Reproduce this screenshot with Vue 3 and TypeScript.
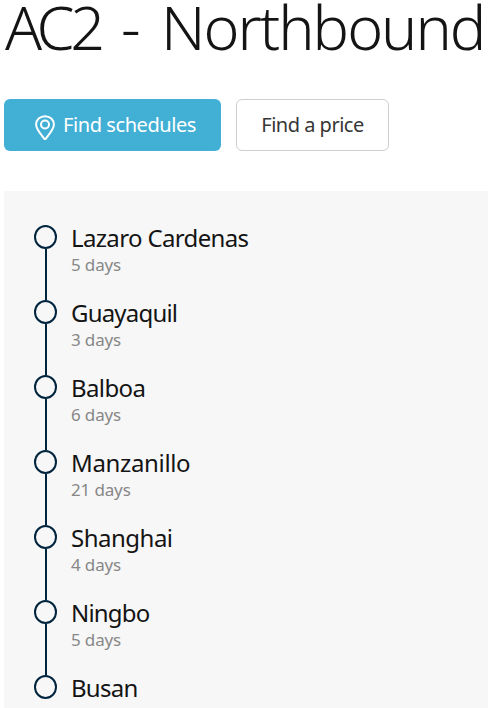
<script setup lang="ts">
interface Stop {
  port: string
  tracking: number
  transit?: string
}

const stops: Stop[] = [
  { port: 'Lazaro Cardenas', tracking: -0.65, transit: '5 days' },
  { port: 'Guayaquil', tracking: -0.8, transit: '3 days' },
  { port: 'Balboa', tracking: -0.6, transit: '6 days' },
  { port: 'Manzanillo', tracking: -0.35, transit: '21 days' },
  { port: 'Shanghai', tracking: -0.5, transit: '4 days' },
  { port: 'Ningbo', tracking: -0.8, transit: '5 days' },
  { port: 'Busan', tracking: -0.75 },
]
</script>

<template>
  <main class="page">
    <h1 class="title"><span class="code">AC2</span> <span class="dash">-</span> <span class="direction">Northbound</span></h1>
    <div class="actions">
      <button class="btn primary" type="button">
        <svg class="pin" viewBox="0 0 20 26" fill="none" stroke="currentColor" stroke-width="2">
          <path d="M9.4 24C7 20.6 1.1 14.6 1.1 9.6C1.1 4.8 5 1.2 10 1.2S18.9 4.8 18.9 9.6C18.9 14.6 13 20.6 10.6 24Z" stroke-linejoin="round" />
          <circle cx="10" cy="9.5" r="4" />
        </svg>
        <span>Find schedules</span>
      </button>
      <button class="btn secondary" type="button"><span>Find a price</span></button>
    </div>
    <ol class="route">
      <li v-for="stop in stops" :key="stop.port" class="stop">
        <div class="rail">
          <span class="dot"></span>
          <span v-if="stop.transit" class="line"></span>
        </div>
        <div class="info">
          <div class="port" :style="{ letterSpacing: stop.tracking + 'px' }">{{ stop.port }}</div>
          <div v-if="stop.transit" class="days">{{ stop.transit }}</div>
        </div>
      </li>
    </ol>
  </main>
</template>

<style>
body {
  background: #fff;
}
</style>

<style scoped>
.page {
  box-sizing: border-box;
  height: 708px;
  padding-left: 4px;
  font-family: "Noto Sans", "Open Sans", sans-serif;
  color: #141414;
}
.title {
  display: flex;
  align-items: flex-start;
  margin: 0;
  height: 99px;
  padding-left: 1px;
  box-sizing: border-box;
  line-height: 54px;
  font-size: 61px;
  font-weight: 300;
  white-space: nowrap;
}
.code {
  width: 116px;
  letter-spacing: -4.3px;
}
.dash {
  width: 40px;
}
.direction {
  letter-spacing: -2px;
}
.actions {
  display: flex;
  gap: 15px;
  height: 52px;
}
.btn {
  box-sizing: border-box;
  display: flex;
  align-items: center;
  justify-content: center;
  height: 52px;
  margin: 0;
  padding: 0;
  border-radius: 6px;
  font: 400 20px/26px "Noto Sans", sans-serif;
  white-space: nowrap;
}
.primary {
  width: 217px;
  border: 0;
  justify-content: flex-start;
  padding-left: 31px;
  gap: 8px;
  background: #42b0d5;
  color: #fff;
  letter-spacing: -0.42px;
}
.pin {
  width: 20px;
  height: 26px;
  margin-top: 5px;
  flex: none;
}
.secondary {
  width: 153px;
  border: 1px solid #cfcfcf;
  background: #fff;
  color: #363636;
  letter-spacing: -0.5px;
}
.route {
  list-style: none;
  margin: 40px 0 0;
  padding: 34px 0 0 30px;
  height: 517px;
  box-sizing: border-box;
  background: #f7f7f7;
}
.stop {
  display: flex;
  height: 75px;
  gap: 14px;
}
.stop:last-child {
  height: 26px;
}
.rail {
  display: flex;
  flex-direction: column;
  align-items: center;
  width: 23px;
}
.dot {
  box-sizing: border-box;
  flex: none;
  width: 23px;
  height: 24px;
  border: 2px solid #00243d;
  border-radius: 50%;
}
.line {
  flex: 1;
  width: 2px;
  background: #00243d;
}
.port {
  height: 26px;
  line-height: 26px;
  font-size: 24px;
  white-space: nowrap;
}
.days {
  height: 26px;
  line-height: 28px;
  font-size: 17px;
  letter-spacing: -0.15px;
  color: #878787;
}
</style>
